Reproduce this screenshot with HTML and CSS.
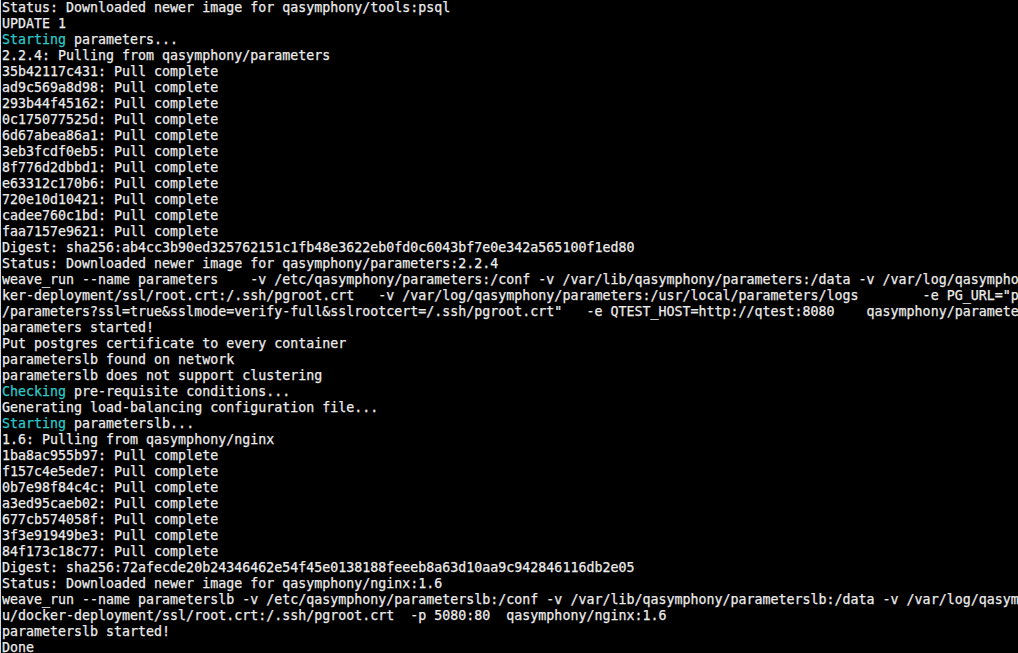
FILE: index.html
```html
<!DOCTYPE html>
<html>
<head>
<meta charset="utf-8">
<title>Terminal</title>
<link rel="stylesheet" href="styles.css">
</head>
<body>
<div class="terminal">
<div class="line">Status: Downloaded newer image for qasymphony/tools:psql</div>
<div class="line">UPDATE 1</div>
<div class="line"><span class="cyan">Starting</span> parameters...</div>
<div class="line">2.2.4: Pulling from qasymphony/parameters</div>
<div class="line">35b42117c431: Pull complete</div>
<div class="line">ad9c569a8d98: Pull complete</div>
<div class="line">293b44f45162: Pull complete</div>
<div class="line">0c175077525d: Pull complete</div>
<div class="line">6d67abea86a1: Pull complete</div>
<div class="line">3eb3fcdf0eb5: Pull complete</div>
<div class="line">8f776d2dbbd1: Pull complete</div>
<div class="line">e63312c170b6: Pull complete</div>
<div class="line">720e10d10421: Pull complete</div>
<div class="line">cadee760c1bd: Pull complete</div>
<div class="line">faa7157e9621: Pull complete</div>
<div class="line">Digest: sha256:ab4cc3b90ed325762151c1fb48e3622eb0fd0c6043bf7e0e342a565100f1ed80</div>
<div class="line">Status: Downloaded newer image for qasymphony/parameters:2.2.4</div>
<div class="line">weave_run --name parameters    -v /etc/qasymphony/parameters:/conf -v /var/lib/qasymphony/parameters:/data -v /var/log/qasympho</div>
<div class="line">ker-deployment/ssl/root.crt:/.ssh/pgroot.crt   -v /var/log/qasymphony/parameters:/usr/local/parameters/logs        -e PG_URL="p</div>
<div class="line">/parameters?ssl=true&amp;sslmode=verify-full&amp;sslrootcert=/.ssh/pgroot.crt"   -e QTEST_HOST=http://qtest:8080    qasymphony/paramete</div>
<div class="line">parameters started!</div>
<div class="line">Put postgres certificate to every container</div>
<div class="line">parameterslb found on network</div>
<div class="line">parameterslb does not support clustering</div>
<div class="line"><span class="cyan">Checking</span> pre-requisite conditions...</div>
<div class="line">Generating load-balancing configuration file...</div>
<div class="line"><span class="cyan">Starting</span> parameterslb...</div>
<div class="line">1.6: Pulling from qasymphony/nginx</div>
<div class="line">1ba8ac955b97: Pull complete</div>
<div class="line">f157c4e5ede7: Pull complete</div>
<div class="line">0b7e98f84c4c: Pull complete</div>
<div class="line">a3ed95caeb02: Pull complete</div>
<div class="line">677cb574058f: Pull complete</div>
<div class="line">3f3e91949be3: Pull complete</div>
<div class="line">84f173c18c77: Pull complete</div>
<div class="line">Digest: sha256:72afecde20b24346462e54f45e0138188feeeb8a63d10aa9c942846116db2e05</div>
<div class="line">Status: Downloaded newer image for qasymphony/nginx:1.6</div>
<div class="line">weave_run --name parameterslb -v /etc/qasymphony/parameterslb:/conf -v /var/lib/qasymphony/parameterslb:/data -v /var/log/qasym</div>
<div class="line">u/docker-deployment/ssl/root.crt:/.ssh/pgroot.crt  -p 5080:80  qasymphony/nginx:1.6</div>
<div class="line">parameterslb started!</div>
<div class="line">Done</div>
</div>
</body>
</html>
```

FILE: styles.css
```css
html, body {
  margin: 0;
  padding: 0;
  background: #000;
  height: 100%;
  overflow: hidden;
}

.terminal {
  box-sizing: border-box;
  height: 653px;
  width: 1018px;
  overflow: hidden;
  border-left: 1px solid #d8d8d8;
  padding-left: 1px;
  padding-top: 0;
  font-family: "DejaVu Sans Mono", monospace;
  font-size: 13.3px;
  line-height: 16px;
  color: #ececec;
  background: #000;
  -webkit-text-stroke: 0.25px currentColor;
}

.line {
  white-space: pre;
  overflow: hidden;
  height: 16px;
}

.cyan {
  color: #2ec8c8;
}
```
